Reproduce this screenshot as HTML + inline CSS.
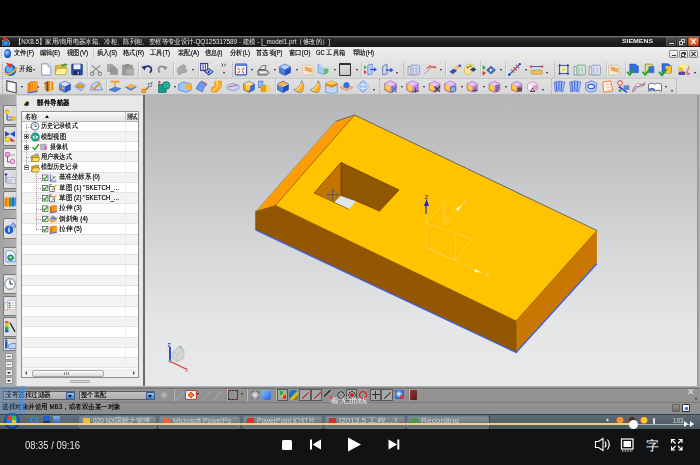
<!DOCTYPE html>
<html><head><meta charset="utf-8"><style>
*{margin:0;padding:0;box-sizing:border-box}
html,body{width:700px;height:465px;overflow:hidden;background:#000;font-family:"Liberation Sans",sans-serif}
.a{position:absolute}
.t{position:absolute;white-space:nowrap;filter:grayscale(1)}
.ic{position:absolute;border-radius:1px}
.dd{position:absolute;width:0;height:0;border-left:1.5px solid transparent;border-right:1.5px solid transparent;border-top:2px solid #222}
.sep{position:absolute;width:1px;background:#c4c4c4;box-shadow:1px 0 0 #ececec}
.grip{position:absolute;width:1px;background:repeating-linear-gradient(#a8a8a8 0 1px,transparent 1px 2px)}
</style></head><body>
<div class="a" style="left:0;top:36px;width:700px;height:11px;background:linear-gradient(#8a8a8a 0,#5c5c5c 1px,#2c2c2c 2px,#1e1e1e 6px,#1a1a1a 100%)"></div>
<div class="ic" style="left:2px;top:38px;width:8px;height:8px;background:radial-gradient(circle at 45% 65%,#40b0ff 0,#1060c0 45%,#e0a020 60%,transparent 64%);"></div>
<div class="ic" style="left:3px;top:37px;width:4px;height:4px;background:#e02828;border-radius:0 50% 50% 50%"></div>
<div class="t" style="left: 15px; top: 36.95px; font-size: 7px; line-height: 9.1px; color: rgb(232, 232, 232); display: inline-block; white-space: nowrap; transform: scaleX(0.9079); transform-origin: 0px 50%; width: 347.5px; overflow: hidden;">【NX8.5】家用/商用电器冰箱、冷柜、陈列柜、变框等专业设计-QQ125317589 - 建模 - [_model1.prt（修改的）]</div>
<div class="t" style="left: 622px; top: 38.1px; font-size: 6px; line-height: 7.8px; color: rgb(236, 236, 236); font-weight: bold; display: inline-block; white-space: nowrap; transform: scaleX(1.1475); transform-origin: 0px 50%; width: 27.6px; overflow: hidden;">SIEMENS</div>
<div class="a" style="left:666px;top:37px;width:10px;height:9px;border:1px solid #5a5a5a;background:linear-gradient(#505050,#2a2a2a);border-radius:1px"><div class="a" style="left:2px;top:5px;width:5px;height:1px;background:#e0e0e0"></div></div>
<div class="a" style="left:677px;top:37px;width:10px;height:9px;border:1px solid #5a5a5a;background:linear-gradient(#505050,#2a2a2a);border-radius:1px"><div class="a" style="left:3px;top:1px;width:4px;height:4px;border:1px solid #ccc"></div><div class="a" style="left:1px;top:3px;width:4px;height:4px;border:1px solid #ccc;background:#333"></div></div>
<div class="a" style="left:688px;top:37px;width:11px;height:9px;border:1px solid #b04a20;background:linear-gradient(#f59060,#d84818);border-radius:1px"><svg class="a" style="left:0;top:0" width="9" height="7" viewBox="0 0 9 7"><path d="M2.5,1.2L6.5,5.8M6.5,1.2L2.5,5.8" stroke="#fff" stroke-width="1.2"></path></svg></div>
<div class="a" style="left:0;top:47px;width:700px;height:13px;background:linear-gradient(#ececec,#e6e6e6)"></div>
<div class="ic" style="left:4px;top:49px;width:7px;height:9px;background:radial-gradient(circle at 40% 40%,#a0d0ff 0,#2a70d8 45%,#1040a0 80%);border-radius:50%"></div>
<div class="grip" style="left:1px;top:49px;height:9px"></div>
<div class="t" style="left: 14px; top: 49.475px; font-size: 6.5px; line-height: 8.45px; color: rgb(30, 30, 30); text-shadow: rgba(0, 0, 0, 0.8) 0px 0px 0.35px; display: inline-block; white-space: nowrap; transform: scaleX(0.8964); transform-origin: 0px 50%; width: 22.9px; overflow: hidden;">文件(F)</div>
<div class="t" style="left: 40px; top: 49.475px; font-size: 6.5px; line-height: 8.45px; color: rgb(30, 30, 30); text-shadow: rgba(0, 0, 0, 0.8) 0px 0px 0.35px; display: inline-block; white-space: nowrap; transform: scaleX(0.8822); transform-origin: 0px 50%; width: 23.2px; overflow: hidden;">编辑(E)</div>
<div class="t" style="left: 67px; top: 49.475px; font-size: 6.5px; line-height: 8.45px; color: rgb(30, 30, 30); text-shadow: rgba(0, 0, 0, 0.8) 0px 0px 0.35px; display: inline-block; white-space: nowrap; transform: scaleX(0.9263); transform-origin: 0px 50%; width: 23.2px; overflow: hidden;">视图(V)</div>
<div class="t" style="left: 97px; top: 49.475px; font-size: 6.5px; line-height: 8.45px; color: rgb(30, 30, 30); text-shadow: rgba(0, 0, 0, 0.8) 0px 0px 0.35px; display: inline-block; white-space: nowrap; transform: scaleX(0.8822); transform-origin: 0px 50%; width: 23.2px; overflow: hidden;">插入(S)</div>
<div class="t" style="left: 123px; top: 49.475px; font-size: 6.5px; line-height: 8.45px; color: rgb(30, 30, 30); text-shadow: rgba(0, 0, 0, 0.8) 0px 0px 0.35px; display: inline-block; white-space: nowrap; transform: scaleX(0.9118); transform-origin: 0px 50%; width: 23.6px; overflow: hidden;">格式(R)</div>
<div class="t" style="left: 150px; top: 49.475px; font-size: 6.5px; line-height: 8.45px; color: rgb(30, 30, 30); text-shadow: rgba(0, 0, 0, 0.8) 0px 0px 0.35px; display: inline-block; white-space: nowrap; transform: scaleX(0.8964); transform-origin: 0px 50%; width: 22.9px; overflow: hidden;">工具(T)</div>
<div class="t" style="left: 177.5px; top: 49.475px; font-size: 6.5px; line-height: 8.45px; color: rgb(30, 30, 30); text-shadow: rgba(0, 0, 0, 0.8) 0px 0px 0.35px; display: inline-block; white-space: nowrap; transform: scaleX(0.9263); transform-origin: 0px 50%; width: 23.2px; overflow: hidden;">装配(A)</div>
<div class="t" style="left: 205px; top: 49.475px; font-size: 6.5px; line-height: 8.45px; color: rgb(30, 30, 30); text-shadow: rgba(0, 0, 0, 0.8) 0px 0px 0.35px; display: inline-block; white-space: nowrap; transform: scaleX(0.8689); transform-origin: 0px 50%; width: 20.7px; overflow: hidden;">信息(I)</div>
<div class="t" style="left: 230px; top: 49.475px; font-size: 6.5px; line-height: 8.45px; color: rgb(30, 30, 30); text-shadow: rgba(0, 0, 0, 0.8) 0px 0px 0.35px; display: inline-block; white-space: nowrap; transform: scaleX(0.911); transform-origin: 0px 50%; width: 22.5px; overflow: hidden;">分析(L)</div>
<div class="t" style="left: 256px; top: 49.475px; font-size: 6.5px; line-height: 8.45px; color: rgb(30, 30, 30); text-shadow: rgba(0, 0, 0, 0.8) 0px 0px 0.35px; display: inline-block; white-space: nowrap; transform: scaleX(0.8931); transform-origin: 0px 50%; width: 30.2px; overflow: hidden;">首选项(P)</div>
<div class="t" style="left: 288.5px; top: 49.475px; font-size: 6.5px; line-height: 8.45px; color: rgb(30, 30, 30); text-shadow: rgba(0, 0, 0, 0.8) 0px 0px 0.35px; display: inline-block; white-space: nowrap; transform: scaleX(0.9192); transform-origin: 0px 50%; width: 23.9px; overflow: hidden;">窗口(O)</div>
<div class="t" style="left: 316px; top: 49.475px; font-size: 6.5px; line-height: 8.45px; color: rgb(30, 30, 30); text-shadow: rgba(0, 0, 0, 0.8) 0px 0px 0.35px; display: inline-block; white-space: nowrap; transform: scaleX(0.8906); transform-origin: 0px 50%; width: 33.1px; overflow: hidden;">GC 工具箱</div>
<div class="t" style="left: 352.5px; top: 49.475px; font-size: 6.5px; line-height: 8.45px; color: rgb(30, 30, 30); text-shadow: rgba(0, 0, 0, 0.8) 0px 0px 0.35px; display: inline-block; white-space: nowrap; transform: scaleX(0.9118); transform-origin: 0px 50%; width: 23.6px; overflow: hidden;">帮助(H)</div>
<div class="sep" style="left:93px;top:49px;height:9px"></div>
<div class="a" style="left:669px;top:50px;width:9px;height:8px;border:1px solid #8a8a8a;background:linear-gradient(#fafafa,#dcdcdc);border-radius:1px"></div>
<div class="a" style="left:679px;top:50px;width:9px;height:8px;border:1px solid #8a8a8a;background:linear-gradient(#fafafa,#dcdcdc);border-radius:1px"></div>
<div class="a" style="left:689px;top:50px;width:9px;height:8px;border:1px solid #8a8a8a;background:linear-gradient(#fafafa,#dcdcdc);border-radius:1px"></div>
<div class="a" style="left:671.5px;top:55px;width:4px;height:1px;background:#333"></div>
<div class="a" style="left:682px;top:51.5px;width:4px;height:3.5px;border:1px solid #444"></div><div class="a" style="left:680.5px;top:53px;width:4px;height:3.5px;border:1px solid #444;background:#eee"></div>
<svg class="a" style="left:689px;top:50px" width="9" height="8" viewBox="0 0 9 8"><path d="M2.3,1.8L6.7,6.2M6.7,1.8L2.3,6.2" stroke="#333" stroke-width="1.1"></path></svg>
<div class="a" style="left:0;top:60px;width:700px;height:18px;background:linear-gradient(#e4e4e4,#d8d8d8)"></div>
<div class="a" style="left:0;top:78px;width:700px;height:17px;background:linear-gradient(#e2e2e2,#d6d6d6)"></div>
<div class="a" style="left:0;top:77.5px;width:700px;height:1px;background:#c8c8c8"></div>
<div class="a" style="left:0;top:94px;width:700px;height:1px;background:#b8b8b8"></div>
<div class="a" style="left:676px;top:78px;width:24px;height:16px;background:#dcdcdc;border-left:1px solid #c0c0c0"></div>
<div class="grip" style="left:2px;top:62px;height:15px"></div>
<div class="t" style="left: 19px; top: 65.275px; font-size: 6.5px; line-height: 8.45px; color: rgb(17, 17, 17); text-shadow: rgba(0, 0, 0, 0.7) 0px 0px 0.4px; display: inline-block; white-space: nowrap; transform: scaleX(0.9286); transform-origin: 0px 50%; width: 14.5px; overflow: hidden;">开始</div>
<div class="dd" style="left:33.0px;top:68.5px;border-top-color:#222"></div>
<div class="sep" style="left:87px;top:62px;height:15px"></div>
<div class="sep" style="left:137.5px;top:62px;height:15px"></div>
<div class="sep" style="left:172.5px;top:62px;height:15px"></div>
<div class="dd" style="left:191.5px;top:69px;border-top-color:#222"></div>
<div class="sep" style="left:197.5px;top:62px;height:15px"></div>
<svg class="a" style="left:221px;top:63px" width="6" height="4" viewBox="0 0 6 4"><path d="M0.5,0.5L2,2L0.5,3.5M3,0.5L4.5,2L3,3.5" stroke="#333" stroke-width="0.8" fill="none"></path></svg>
<div class="dd" style="left:222.5px;top:72px;border-top-color:#222"></div>
<div class="grip" style="left:232px;top:62px;height:15px"></div>
<div class="dd" style="left:251.0px;top:69px;border-top-color:#222"></div>
<div class="dd" style="left:273.5px;top:69px;border-top-color:#222"></div>
<div class="dd" style="left:295.5px;top:69px;border-top-color:#222"></div>
<div class="dd" style="left:333.5px;top:69px;border-top-color:#222"></div>
<div class="ic" style="left:339px;top:63px;width:12px;height:13px;background:linear-gradient(#e0e0e0,#c4c4c4);border:1.2px solid #303030;border-top-width:2px;border-radius:1px"></div>
<div class="dd" style="left:355.5px;top:69px;border-top-color:#222"></div>
<div class="sep" style="left:360.5px;top:62px;height:15px"></div>
<div class="dd" style="left:395.5px;top:72px;border-top-color:#222"></div>
<div class="grip" style="left:403px;top:62px;height:15px"></div>
<div class="dd" style="left:439.5px;top:69px;border-top-color:#222"></div>
<div class="sep" style="left:444.5px;top:62px;height:15px"></div>
<div class="sep" style="left:480px;top:62px;height:15px"></div>
<div class="dd" style="left:499.5px;top:69px;border-top-color:#222"></div>
<div class="sep" style="left:504.7px;top:62px;height:15px"></div>
<div class="dd" style="left:524.5px;top:69px;border-top-color:#222"></div>
<div class="dd" style="left:546.0px;top:72px;border-top-color:#222"></div>
<div class="grip" style="left:554px;top:62px;height:15px"></div>
<div class="sep" style="left:605.5px;top:62px;height:15px"></div>
<div class="sep" style="left:625px;top:62px;height:15px"></div>
<div class="dd" style="left:693.5px;top:72px;border-top-color:#222"></div>
<div class="grip" style="left:2px;top:79px;height:15px"></div>
<div class="dd" style="left:20.5px;top:86px;border-top-color:#222"></div>
<div class="sep" style="left:106px;top:79px;height:15px"></div>
<div class="dd" style="left:173.5px;top:86px;border-top-color:#222"></div>
<div class="sep" style="left:274.5px;top:79px;height:15px"></div>
<div class="dd" style="left:372.5px;top:89px;border-top-color:#222"></div>
<div class="grip" style="left:378.5px;top:79px;height:15px"></div>
<div class="dd" style="left:400.5px;top:86px;border-top-color:#222"></div>
<div class="dd" style="left:422.5px;top:86px;border-top-color:#222"></div>
<div class="dd" style="left:460.5px;top:86px;border-top-color:#222"></div>
<div class="dd" style="left:482.5px;top:86px;border-top-color:#222"></div>
<div class="dd" style="left:504.5px;top:86px;border-top-color:#222"></div>
<div class="dd" style="left:541.5px;top:89px;border-top-color:#222"></div>
<div class="grip" style="left:550.5px;top:79px;height:15px"></div>
<div class="dd" style="left:664.5px;top:86px;border-top-color:#222"></div>
<div class="dd" style="left:670.5px;top:90px;border-top-color:#222"></div>
<svg class="a" style="left:0;top:0" width="700" height="100" viewBox="0 0 700 100"><g transform="translate(3.50,62.50) scale(1.167)"><circle cx="6" cy="6.5" r="5" fill="#1a6ad8"></circle><circle cx="5" cy="5.5" r="3" fill="#50b8ff"></circle><path d="M0.5,9Q6,12 11.5,4" stroke="#f0b020" stroke-width="1.5" fill="none"></path><path d="M2,0.5L6,4.5L4,0.5Z" fill="#e02020"></path><path d="M3,1L6,5L8,1Z" fill="#e83030"></path></g><g transform="translate(39.50,63.00) scale(1.083)"><path d="M2,0.8H7.8L10.5,3.5V11.2H2Z" fill="#ffffff" stroke="#7080c8" stroke-width="0.8"></path><path d="M7.8,0.8V3.5H10.5" fill="#e0e4ff" stroke="#7080c8" stroke-width="0.6"></path></g><g transform="translate(54.50,63.00) scale(1.083)"><path d="M0.8,2.5H4.5L5.5,1.5H10.5V10.5H0.8Z" fill="#e8b830" stroke="#a07810" stroke-width="0.5"></path><path d="M2,5H11.8L10.3,10.8H0.5Z" fill="#fff0a0" stroke="#b08810" stroke-width="0.5"></path><path d="M7,3.5Q9,0 11.5,2" stroke="#30a040" stroke-width="1.4" fill="none"></path></g><g transform="translate(70.50,63.00) scale(1.083)"><rect x="1" y="1" width="10" height="10" rx="0.8" fill="#2a4aa8" stroke="#102a70" stroke-width="0.5"></rect><rect x="2.8" y="1.2" width="6.4" height="4.5" fill="#eef2ff"></rect><rect x="3.2" y="7.5" width="5.6" height="3.5" fill="#1a2a60"></rect><rect x="6.5" y="8" width="1.2" height="2.5" fill="#c0c8e0"></rect></g><g transform="translate(89.50,63.00) scale(1.083)"><path d="M2,2L10,9M10,2L2,9" stroke="#9a9a9a" stroke-width="1.2"></path><circle cx="2.5" cy="10" r="1.6" fill="none" stroke="#8a8a8a" stroke-width="1"></circle><circle cx="9.5" cy="10" r="1.6" fill="none" stroke="#8a8a8a" stroke-width="1"></circle></g><g transform="translate(106.50,63.50) scale(1.000)"><path d="M1,1H6L8,3V8H1Z" fill="#a8a8a8" stroke="#888" stroke-width="0.5"></path><path d="M4,4H9L11,6V11H4Z" fill="#989898" stroke="#808080" stroke-width="0.5"></path></g><g transform="translate(121.50,63.00) scale(1.083)"><rect x="1" y="2" width="9" height="9" fill="#9a9a9a" stroke="#808080" stroke-width="0.5"></rect><rect x="3.5" y="1" width="4" height="2" fill="#888"></rect><rect x="4" y="5" width="7" height="6" fill="#b0b0b0" stroke="#888" stroke-width="0.5"></rect></g><g transform="translate(140.50,63.00) scale(1.083)"><path d="M3,5Q6,1.5 9.5,4Q11,7 8.5,9" fill="none" stroke="#1a3080" stroke-width="1.6"></path><path d="M0.8,3.5L4.8,2.5L4,7Z" fill="#1a3080"></path></g><g transform="translate(156.50,63.50) scale(1.000)"><path d="M9,5Q6,1.5 2.5,4Q1,7 3.5,9" fill="none" stroke="#8a8a8a" stroke-width="1.6"></path><path d="M11.2,3.5L7.2,2.5L8,7Z" fill="#8a8a8a"></path></g><g transform="translate(175.50,63.00) scale(1.083)"><path d="M2,8Q1,4 5,3L7,1.5Q10,2 9,5L11,7Q9,10 6,9L3,11Z" fill="#a8a8a8" stroke="#8a8a8a" stroke-width="0.5"></path><path d="M0.5,6H4M0.5,8H3.5" stroke="#b8b8b8" stroke-width="0.6"></path></g><g transform="translate(199.50,62.50) scale(1.167)"><rect x="1" y="0.8" width="6" height="6" fill="#f4f4ff" stroke="#2a3a90" stroke-width="0.9"></rect><path d="M3,1V6.5M5,1V6.5" stroke="#2a3a90" stroke-width="0.8"></path><path d="M4.5,7.5L8,5.5L11.5,8L8,10.5Z" fill="#f4f4ff" stroke="#2a3a90" stroke-width="0.9"></path><circle cx="8" cy="8" r="1.2" fill="#2040c0"></circle></g><g transform="translate(234.50,63.00) scale(1.083)"><rect x="0.8" y="1" width="10.4" height="10" rx="0.8" fill="#f4f6ff" stroke="#3050b0" stroke-width="1"></rect><rect x="0.8" y="1" width="10.4" height="1.8" fill="#5a80d8"></rect><path d="M3,4.5L5,6.5M9,4.5L7,6.5M3,9.5L5,7.5M9,9.5L7,7.5" stroke="#f06040" stroke-width="1.1"></path></g><g transform="translate(257.00,63.00) scale(1.083)"><path d="M2,6L5,2.5H8.5L7,6Z" fill="#f0f0f0" stroke="#404040" stroke-width="0.7"></path><path d="M1,6.5H9L11,9L9,11H1Z" fill="#c8c8c8" stroke="#404040" stroke-width="0.8"></path><path d="M3,8.5H8" stroke="#fff" stroke-width="0.8"></path></g><g transform="translate(278.50,63.00) scale(1.083)"><path d="M1,3.5L6,1L11,3.5L6,6Z" fill="#b8d4ff"></path><path d="M1,3.5L6,6V11.5L1,9Z" fill="#4a7ee8"></path><path d="M6,6L11,3.5V9L6,11.5Z" fill="#2a52c0"></path><path d="M1,3.5L6,1L11,3.5V9L6,11.5L1,9Z" fill="none" stroke="#1a3a90" stroke-width="0.5"></path></g><g transform="translate(301.50,63.00) scale(1.083)"><path d="M1,2H9L11,4V11H1Z" fill="#f4e8d8" stroke="#c8b090" stroke-width="0.5"></path><path d="M3,3L10,5V9L3,7Z" fill="#f0a040" opacity="0.9"></path></g><g transform="translate(317.00,63.25) scale(1.042)"><path d="M1,1L7,3V11L1,9Z" fill="#a8c8f0" stroke="#5080c0" stroke-width="0.5"></path><path d="M7,3L11,5V9L7,11Z" fill="#60c060"></path><path d="M1,1L5,1L11,5H7Z" fill="#d0e0f8"></path></g><g transform="translate(363.50,63.00) scale(1.083)"><path d="M0.5,2L3,4L0.5,6Z" fill="#30b040"></path><path d="M0.5,6.5L3,8.5L0.5,10.5Z" fill="#e03030"></path><path d="M4,2L8,1V10L4,11Z" fill="#b8d0f0" stroke="#3060c0" stroke-width="0.5"></path><path d="M6,6H11.5M9.5,4.5L11.5,6L9.5,7.5" stroke="#2050d0" stroke-width="1.1" fill="none"></path></g><g transform="translate(380.50,63.00) scale(1.083)"><path d="M2,3L6,1V10L2,11Z" fill="#c8d8f4" stroke="#405080" stroke-width="0.6"></path><path d="M5,6.5H11M9,5L11,6.5L9,8" stroke="#2050d0" stroke-width="1.1" fill="none"></path></g><g transform="translate(407.50,63.00) scale(1.083)"><rect x="0.5" y="3" width="7" height="8" fill="#e0e0e0" stroke="#707070" stroke-width="0.5"></rect><rect x="3" y="2" width="8" height="9" rx="1" fill="#d0d8f0" stroke="#8090b8" stroke-width="0.7"></rect><path d="M5,4V10M8,4V10" stroke="#8090b8" stroke-width="0.6"></path></g><g transform="translate(423.50,63.00) scale(1.083)"><path d="M1,10L5,6L9,3" stroke="#808080" stroke-width="0.7" fill="none"></path><path d="M3,5L6,3L10,4" stroke="#e04030" stroke-width="1" fill="none"></path><circle cx="6" cy="3" r="1" fill="#f06040"></circle><circle cx="10.5" cy="4" r="1" fill="#e04030"></circle></g><g transform="translate(448.50,63.00) scale(1.083)"><path d="M1,8L5,5L8,7L4,10.5Z" fill="#3050b0"></path><path d="M4.5,5L9,1.5L11,3.5L7.5,7Z" fill="#f0c080"></path><circle cx="10.5" cy="2.5" r="1.2" fill="#3050c0"></circle></g><g transform="translate(463.50,63.00) scale(1.083)"><path d="M1,5Q2,1 7,1Q11,2 10,6Q7,7 6,10Q3,12 1,9Z" fill="#f8e890" stroke="#c0a030" stroke-width="0.5"></path><circle cx="4" cy="4" r="1" fill="#e03030"></circle><circle cx="6.5" cy="3" r="1" fill="#30a040"></circle><path d="M6,6L9,4L12,6L9,8Z" fill="#2a3a90"></path></g><g transform="translate(482.00,62.75) scale(1.125)"><path d="M0.5,2L3.5,4.5L0.5,6.5Z" fill="#30b030"></path><path d="M0.5,7L3.5,9L0.5,11.5Z" fill="#e03030"></path><path d="M4,6.5L8,3L12,6.5L8,10Z" fill="#4070d0" stroke="#203a90" stroke-width="0.5"></path><path d="M7,5L9.5,6.5L7,8Z" fill="#fff"></path></g><g transform="translate(507.50,62.50) scale(1.167)"><path d="M1,11L11,1" stroke="#3050d0" stroke-width="1"></path><path d="M3,6L6,9M5,4L8,7M7,2L10,5" stroke="#e04040" stroke-width="0.9"></path><circle cx="1.5" cy="10.5" r="1" fill="#2040c0"></circle><circle cx="10.5" cy="1.5" r="1" fill="#2040c0"></circle></g><g transform="translate(529.50,62.50) scale(1.167)"><path d="M0.5,3.5H11.5" stroke="#3050c0" stroke-width="0.8"></path><circle cx="1.2" cy="3.5" r="1" fill="#e04040"></circle><circle cx="10.8" cy="3.5" r="1" fill="#e04040"></circle><rect x="1" y="6.5" width="10" height="3.5" rx="1" fill="#e8c060" stroke="#b09040" stroke-width="0.5"></rect></g><g transform="translate(557.50,63.25) scale(1.042)"><rect x="2" y="2" width="8" height="8" fill="none" stroke="#2a3a90" stroke-width="0.8"></rect><rect x="3.5" y="3.5" width="5" height="5" fill="#f8f0a0"></rect><circle cx="6" cy="6" r="1.3" fill="#e8d020"></circle><circle cx="2" cy="2" r="1" fill="#2a3a90"></circle><circle cx="10" cy="2" r="1" fill="#2a3a90"></circle><circle cx="2" cy="10" r="1" fill="#2a3a90"></circle><circle cx="10" cy="10" r="1" fill="#2a3a90"></circle></g><g transform="translate(573.50,63.00) scale(1.083)"><rect x="0.5" y="3" width="7" height="8" fill="#e0e0e0" stroke="#707070" stroke-width="0.5"></rect><rect x="3" y="2" width="8" height="9" rx="1" fill="#d8e8d8" stroke="#60a080" stroke-width="0.7"></rect><path d="M5,4V10M8,4V10" stroke="#60a080" stroke-width="0.6"></path></g><g transform="translate(588.50,63.00) scale(1.083)"><rect x="0.5" y="3" width="7" height="8" fill="#e0e0e0" stroke="#707070" stroke-width="0.5"></rect><rect x="3" y="2" width="8" height="9" rx="1" fill="#e0e4f0" stroke="#8090b8" stroke-width="0.7"></rect><path d="M5,4V10M8,4V10" stroke="#8090b8" stroke-width="0.6"></path></g><g transform="translate(607.50,63.00) scale(1.083)"><path d="M1,2H9L11,4V11H1Z" fill="#f4e8d8" stroke="#c8b090" stroke-width="0.5"></path><path d="M3,3L10,5V9L3,7Z" fill="#f0a040" opacity="0.9"></path></g><g transform="translate(626.50,63.00) scale(1.083)"><path d="M3,1H8L11,3V9H3Z" fill="#3070e0" stroke="#2050b0" stroke-width="0.5"></path><path d="M0.5,8L3,11L7,5.5" stroke="#20a020" stroke-width="1.5" fill="none"></path></g><g transform="translate(642.00,63.00) scale(1.083)"><path d="M3,1H8L11,3V9H3Z" fill="#f0e060" stroke="#2050b0" stroke-width="0.5"></path><path d="M6,3H11V9H6Z" fill="#3070e0"></path><path d="M0.5,8L3,11L7,5.5" stroke="#20a020" stroke-width="1.5" fill="none"></path></g><g transform="translate(658.50,62.50) scale(1.167)"><path d="M3,1H8L11,3V9H3Z" fill="#3070e0" stroke="#2050b0" stroke-width="0.5"></path><path d="M6,3H11V9H6Z" fill="#ffc020"></path><path d="M0.5,8L3,11L7,5.5" stroke="#20a020" stroke-width="1.5" fill="none"></path></g><g transform="translate(677.50,63.00) scale(1.083)"><path d="M1,3L5,1L9,3L5,5Z" fill="#fff080"></path><path d="M1,3L5,5V9L1,7Z" fill="#f0c020"></path><rect x="1" y="8" width="6" height="3" fill="#6040a0"></rect><path d="M8,10L11,3" stroke="#e08030" stroke-width="1.2"></path><path d="M9,8.5L12,10L9,11.5Z" fill="#e040c0"></path></g><g transform="translate(4.50,79.50) scale(1.167)"><path d="M2,1L10,3V11.5L2,9.5Z" fill="#f8f8f8" stroke="#404040" stroke-width="0.9"></path></g><g transform="translate(26.50,80.00) scale(1.083)"><path d="M1,3L4,1.5V10.5L1,12Z" fill="#f08000"></path><path d="M4,1.5H10V10.5H4Z" fill="#ffb030" stroke="#c06000" stroke-width="0.4"></path><path d="M5.5,2V10M8,2V10" stroke="#e07000" stroke-width="0.6"></path><path d="M10,5L12,6.5L10,8Z" fill="#e03030"></path><path d="M1,12L10,10.5" stroke="#3060d0" stroke-width="1"></path></g><g transform="translate(42.50,80.00) scale(1.083)"><path d="M2,2Q6,0 10,2V9Q6,12 2,9Z" fill="#f09000"></path><path d="M4.5,1.5V10.5" stroke="#2a50c0" stroke-width="1.5"></path><path d="M7.5,1.5V10.5" stroke="#ffd060" stroke-width="1.2"></path><path d="M1.5,3H3.5" stroke="#e03030" stroke-width="1"></path></g><g transform="translate(58.50,80.00) scale(1.083)"><path d="M1,3.5L6,1L11,3.5L6,6Z" fill="#d0e4ff"></path><path d="M1,3.5L6,6V11.5L1,9Z" fill="#5a8ef0"></path><path d="M6,6L11,3.5V9L6,11.5Z" fill="#2a5ad0"></path><path d="M1,3.5L6,1L11,3.5V9L6,11.5L1,9Z" fill="none" stroke="#1a3a90" stroke-width="0.5"></path><circle cx="4" cy="7.5" r="1.5" fill="#f06020"></circle><circle cx="4" cy="7.5" r="0.8" fill="#ffd020"></circle></g><g transform="translate(73.50,80.00) scale(1.083)"><path d="M1,6L6,2L11,5L7,10Z" fill="#b0d0ff" stroke="#4a80d0" stroke-width="0.6"></path><ellipse cx="6" cy="5.8" rx="3.2" ry="1.7" fill="#f0a000" stroke="#c06000" stroke-width="0.4"></ellipse></g><g transform="translate(89.50,79.50) scale(1.167)"><path d="M1,9Q1,2 8,2L11,9Z" fill="#c0d8ff" stroke="#5a7ac8" stroke-width="0.6"></path><path d="M4,8L9,3" stroke="#f09000" stroke-width="1.6"></path><path d="M2,6L5,9" stroke="#e04040" stroke-width="0.6"></path></g><g transform="translate(108.50,80.00) scale(1.083)"><path d="M2,1.5H10" stroke="#f0a030" stroke-width="1.8"></path><path d="M6,2V7" stroke="#f0a030" stroke-width="1.2"></path><path d="M0.5,9L6,6.5L11.5,8L6,11Z" fill="#4a80e8" stroke="#2050b0" stroke-width="0.4"></path></g><g transform="translate(124.50,80.00) scale(1.083)"><path d="M0.5,7L6,4L11.5,6.5L6,10Z" fill="#4a7ee8"></path><path d="M1.5,6L6,3.5L10.5,5.5L6,8Z" fill="#ffa020"></path><path d="M3,5L7.5,7.5M4.5,4.3L9,6.8M4,6.8L8,4.8" stroke="#ffd080" stroke-width="0.5"></path></g><g transform="translate(141.50,80.00) scale(1.083)"><path d="M2,10L6,7L10,2" stroke="#4a70c0" stroke-width="1" fill="none"></path><rect x="0.5" y="8.5" width="3" height="3" fill="#f0d000" stroke="#e04020" stroke-width="0.6"></rect><rect x="6.5" y="3" width="3" height="3" fill="#f0e060" stroke="#5070c0" stroke-width="0.6"></rect><circle cx="5" cy="8" r="1" fill="#f06020"></circle></g><g transform="translate(157.50,80.00) scale(1.083)"><rect x="1" y="4" width="7" height="7.5" fill="#10a090" stroke="#106050" stroke-width="0.6"></rect><circle cx="8" cy="5" r="3.5" fill="#20b0a0" stroke="#106050" stroke-width="0.6"></circle><path d="M0.5,2H3M1.7,0.8V3.2" stroke="#e02020" stroke-width="0.9"></path></g><g transform="translate(178.00,79.50) scale(1.167)"><path d="M0.5,4L5,2L11.5,4V9L7,11L0.5,9Z" fill="#a0c4ff" stroke="#4070d0" stroke-width="0.5"></path><path d="M6,3L11.5,4V9L6,8Z" fill="#ffb040"></path></g><g transform="translate(195.00,80.00) scale(1.083)"><path d="M1,8Q3,3 6,1L11,4Q8,6 7,11Z" fill="#6a9af0" stroke="#3060c0" stroke-width="0.5"></path><path d="M6,1L11,4L9,5.5" stroke="#e04040" stroke-width="0.8" fill="none"></path></g><g transform="translate(210.50,80.00) scale(1.083)"><path d="M4,1H10V6L6,11H1V7L4,6Z" fill="#ffb020" stroke="#e07000" stroke-width="0.5"></path><path d="M4,1H6V7L1,11" stroke="#fff090" stroke-width="0.8" fill="none"></path></g><g transform="translate(226.50,80.00) scale(1.083)"><path d="M0.5,5L6,3L11.5,5V8L6,10L0.5,8Z" fill="#c8d8f8" stroke="#5070c0" stroke-width="0.5"></path><path d="M2,6.5L10,4.5" stroke="#e04040" stroke-width="0.8"></path></g><g transform="translate(242.50,80.00) scale(1.083)"><path d="M1,3.5L6,1L11,3.5L6,6Z" fill="#ffe080"></path><path d="M1,3.5L6,6V11.5L1,9Z" fill="#f0a020"></path><path d="M6,6L11,3.5V9L6,11.5Z" fill="#3a70e0"></path><path d="M1,3.5L6,1L11,3.5V9L6,11.5L1,9Z" fill="none" stroke="#2050b0" stroke-width="0.5"></path><rect x="3" y="5" width="4" height="4" fill="#ffd040"></rect></g><g transform="translate(257.50,80.00) scale(1.083)"><rect x="1" y="1" width="4" height="6" fill="#90b8f0" stroke="#3060c0" stroke-width="0.5"></rect><path d="M3,6L8,4V11L3,11Z" fill="#f0a000"></path><path d="M8,4L11,5V11H8Z" fill="#ffd060"></path></g><g transform="translate(276.50,80.00) scale(1.083)"><path d="M1,3.5L6,1L11,3.5L6,6Z" fill="#ffb040"></path><path d="M1,3.5L6,6V11.5L1,9Z" fill="#4a80e8"></path><path d="M6,6L11,3.5V9L6,11.5Z" fill="#2050c0"></path><path d="M1,3.5L6,1L11,3.5V9L6,11.5L1,9Z" fill="none" stroke="#1a3a90" stroke-width="0.5"></path><path d="M1,3.5L6,6L11,3.5" stroke="#fff" stroke-width="0.6" fill="none"></path><rect x="2" y="5" width="3" height="1.5" fill="#f08000"></rect></g><g transform="translate(293.00,80.00) scale(1.083)"><path d="M8,0.5Q12,6 8,11.5Q3,12 0.5,9Q6,8 8,0.5Z" fill="#ffb020" stroke="#5070c0" stroke-width="0.5"></path><path d="M2,9.5Q6,9 7.8,3" stroke="#ffe080" stroke-width="1" fill="none"></path></g><g transform="translate(309.50,80.00) scale(1.083)"><path d="M8,0.5Q12,6 8,11.5Q3,12 0.5,9Q6,8 8,0.5Z" fill="#ffb020" stroke="#5070c0" stroke-width="0.5"></path><path d="M2,9.5Q6,9 7.8,3" stroke="#ffe080" stroke-width="1" fill="none"></path></g><g transform="translate(324.50,79.50) scale(1.167)"><path d="M1,3L6,1L11,3V11L6,12L1,11Z" fill="#c0d8f8" stroke="#5080c0" stroke-width="0.5"></path><path d="M1,3L6,1L11,3L6,5Z" fill="#ffd040"></path><path d="M1,3L6,5L11,3V5L6,7L1,5Z" fill="#f08020"></path></g><g transform="translate(339.50,79.50) scale(1.167)"><path d="M0.5,7L6,4.5L11.5,7L6,9.5Z" fill="#f0c0a0" stroke="#e07040" stroke-width="0.5"></path><path d="M3.5,3.5L6,2L8.5,3.5V6.5L6,8L3.5,6.5Z" fill="#3070e0"></path></g><g transform="translate(356.50,80.00) scale(1.083)"><path d="M6,0.5L11.5,6L6,11.5L0.5,6Z" fill="#a0c4ff" stroke="#3a6ad0" stroke-width="0.6"></path><ellipse cx="6" cy="6" rx="5" ry="2" fill="none" stroke="#fff" stroke-width="0.6"></ellipse><path d="M6,1V11" stroke="#fff" stroke-width="0.5"></path></g><g transform="translate(383.50,79.50) scale(1.167)"><path d="M1,3.5L6,1L11,3.5L6,6Z" fill="#e8c0ff"></path><path d="M1,3.5L6,6V11.5L1,9Z" fill="#f8a800"></path><path d="M6,6L11,3.5V9L6,11.5Z" fill="#c080e0"></path><path d="M1,3.5L6,1L11,3.5V9L6,11.5L1,9Z" fill="none" stroke="#9050b0" stroke-width="0.5"></path><path d="M1.8,4.5L5.5,6.3V10L1.8,8.2Z" fill="#ffd040"></path><path d="M7,6L11,11M11,6L7,11" stroke="#606060" stroke-width="0.9"></path><circle cx="9" cy="8.5" r="1.5" fill="#5080d0"></circle></g><g transform="translate(405.50,79.50) scale(1.167)"><path d="M1,3.5L6,1L11,3.5L6,6Z" fill="#e8c0ff"></path><path d="M1,3.5L6,6V11.5L1,9Z" fill="#f8a800"></path><path d="M6,6L11,3.5V9L6,11.5Z" fill="#c080e0"></path><path d="M1,3.5L6,1L11,3.5V9L6,11.5L1,9Z" fill="none" stroke="#9050b0" stroke-width="0.5"></path><path d="M1.8,4.5L5.5,6.3V10L1.8,8.2Z" fill="#ffd040"></path><path d="M6,10H11.5M8.7,7V11.5" stroke="#404040" stroke-width="0.8"></path></g><g transform="translate(428.00,80.00) scale(1.083)"><path d="M1,3.5L6,1L11,3.5L6,6Z" fill="#e8c0ff"></path><path d="M1,3.5L6,6V11.5L1,9Z" fill="#f8a800"></path><path d="M6,6L11,3.5V9L6,11.5Z" fill="#c080e0"></path><path d="M1,3.5L6,1L11,3.5V9L6,11.5L1,9Z" fill="none" stroke="#9050b0" stroke-width="0.5"></path><path d="M1.8,4.5L5.5,6.3V10L1.8,8.2Z" fill="#ffd040"></path><path d="M6,6L11,11M11,6L6,11" stroke="#404040" stroke-width="1.2"></path></g><g transform="translate(443.50,79.75) scale(1.125)"><path d="M1,3.5L6,1L11,3.5L6,6Z" fill="#e8c0ff"></path><path d="M1,3.5L6,6V11.5L1,9Z" fill="#f8a800"></path><path d="M6,6L11,3.5V9L6,11.5Z" fill="#c080e0"></path><path d="M1,3.5L6,1L11,3.5V9L6,11.5L1,9Z" fill="none" stroke="#9050b0" stroke-width="0.5"></path><path d="M1.8,4.5L5.5,6.3V10L1.8,8.2Z" fill="#ffd040"></path><circle cx="8.5" cy="8.5" r="2.5" fill="#90b0e0" stroke="#3050a0" stroke-width="0.6"></circle></g><g transform="translate(466.00,80.25) scale(1.042)"><path d="M1,3.5L6,1L11,3.5L6,6Z" fill="#e8c0ff"></path><path d="M1,3.5L6,6V11.5L1,9Z" fill="#f8a800"></path><path d="M6,6L11,3.5V9L6,11.5Z" fill="#c080e0"></path><path d="M1,3.5L6,1L11,3.5V9L6,11.5L1,9Z" fill="none" stroke="#9050b0" stroke-width="0.5"></path><path d="M1.8,4.5L5.5,6.3V10L1.8,8.2Z" fill="#ffd040"></path><path d="M6,10H11.5M8.7,7V11.5" stroke="#404040" stroke-width="0.8"></path></g><g transform="translate(488.00,80.00) scale(1.083)"><path d="M1,3.5L6,1L11,3.5L6,6Z" fill="#e8c0ff"></path><path d="M1,3.5L6,6V11.5L1,9Z" fill="#f8a800"></path><path d="M6,6L11,3.5V9L6,11.5Z" fill="#c080e0"></path><path d="M1,3.5L6,1L11,3.5V9L6,11.5L1,9Z" fill="none" stroke="#9050b0" stroke-width="0.5"></path><path d="M1.8,4.5L5.5,6.3V10L1.8,8.2Z" fill="#ffd040"></path><circle cx="8.5" cy="6" r="1.3" fill="none" stroke="#404040" stroke-width="0.7"></circle><circle cx="8.5" cy="9.5" r="1.3" fill="none" stroke="#404040" stroke-width="0.7"></circle></g><g transform="translate(510.50,80.25) scale(1.042)"><path d="M1,3.5L6,1L11,3.5L6,6Z" fill="#e8c0ff"></path><path d="M1,3.5L6,6V11.5L1,9Z" fill="#f8a800"></path><path d="M6,6L11,3.5V9L6,11.5Z" fill="#c080e0"></path><path d="M1,3.5L6,1L11,3.5V9L6,11.5L1,9Z" fill="none" stroke="#9050b0" stroke-width="0.5"></path><path d="M1.8,4.5L5.5,6.3V10L1.8,8.2Z" fill="#ffd040"></path><path d="M6.5,7H11V11H6.5Z" fill="#404040" opacity="0.8"></path></g><g transform="translate(526.50,80.50) scale(1.000)"><path d="M1,3.5L6,1L11,3.5L6,6Z" fill="#f8e0f8"></path><path d="M1,3.5L6,6V11.5L1,9Z" fill="#fff0f8"></path><path d="M6,6L11,3.5V9L6,11.5Z" fill="#e0a0d0"></path><path d="M1,3.5L6,1L11,3.5V9L6,11.5L1,9Z" fill="none" stroke="#b070a0" stroke-width="0.5"></path><path d="M4,11L6,7.5L8,11Z" fill="none" stroke="#303030" stroke-width="0.8"></path><path d="M7,5V10" stroke="#f0a000" stroke-width="1"></path></g><g transform="translate(553.00,80.00) scale(1.083)"><path d="M1,2Q6,0 11,2L9,11Q5,9 2,11Z" fill="#a0c0ff" stroke="#3050c0" stroke-width="0.5"></path><path d="M3,2L3.5,10M5.5,1.5L5.5,9.5M8,1.5L7.5,10" stroke="#3a5ad0" stroke-width="0.9"></path></g><g transform="translate(568.50,79.75) scale(1.125)"><path d="M1,2Q6,0 11,2L9,11Q5,9 2,11Z" fill="#a0c0ff" stroke="#3050c0" stroke-width="0.5"></path><path d="M3,2L3.5,10M5.5,1.5L5.5,9.5M8,1.5L7.5,10" stroke="#3a5ad0" stroke-width="0.9"></path></g><g transform="translate(584.50,79.75) scale(1.125)"><path d="M1,3L6,1L11,3L10,10L5,11L1,9Z" fill="#b8d0ff" stroke="#3050c0" stroke-width="0.5"></path><ellipse cx="6" cy="6" rx="3" ry="2" fill="#e8f0ff" stroke="#2a4ab0" stroke-width="0.9"></ellipse></g><g transform="translate(600.50,79.75) scale(1.125)"><path d="M2,2L9,1L11,10L3,11Z" fill="#fff8f0" stroke="#f07030" stroke-width="0.8"></path><path d="M4,4H9M4.5,6.5H9.5M5,9H10" stroke="#f0a060" stroke-width="0.6"></path></g><g transform="translate(616.50,79.50) scale(1.167)"><circle cx="3" cy="3" r="2" fill="#f0f0f0" stroke="#e03030" stroke-width="0.8"></circle><path d="M2,6L9,11" stroke="#3050c0" stroke-width="1.4"></path><rect x="6" y="5" width="5" height="4" fill="#6080d0"></rect><circle cx="3" cy="9.5" r="1.2" fill="#30a040"></circle></g><g transform="translate(631.50,79.50) scale(1.167)"><path d="M1,9Q4,2 8,4T11,2V5Q8,7 5,6T1,11Z" fill="#f4f4ff" stroke="#e06060" stroke-width="0.6"></path><path d="M2,10Q5,5 11,4" stroke="#4070d0" stroke-width="0.8" fill="none"></path></g><g transform="translate(648.00,79.50) scale(1.167)"><path d="M0.5,4Q4,2 6,4Q8,2 11.5,4V10Q8,8 6,10Q4,8 0.5,10Z" fill="#ffffff" stroke="#404040" stroke-width="0.6"></path><path d="M1,8.5Q4,7 6,9" stroke="#3050c0" stroke-width="1.2" fill="none"></path></g></svg>
<div class="a" style="left:0;top:95px;width:17px;height:291px;background:linear-gradient(90deg,#a4a4a4,#b0b0b0)"></div>
<div class="a" style="left:3px;top:105px;width:13px;height:20px;border:1px solid #7a7a7a;border-right:none;border-radius:2px 0 0 2px;background:linear-gradient(90deg,#e4e4e4,#d6d6d6)"></div>
<div class="a" style="left:3px;top:126px;width:13px;height:20px;border:1px solid #7a7a7a;border-right:none;border-radius:2px 0 0 2px;background:linear-gradient(90deg,#e4e4e4,#d6d6d6)"></div>
<div class="a" style="left:3px;top:148px;width:15px;height:20px;border:1px solid #7a7a7a;border-right:none;border-radius:2px 0 0 2px;background:#eeeeee"></div>
<div class="a" style="left:3px;top:169px;width:13px;height:20px;border:1px solid #7a7a7a;border-right:none;border-radius:2px 0 0 2px;background:linear-gradient(90deg,#e4e4e4,#d6d6d6)"></div>
<div class="a" style="left:3px;top:191px;width:13px;height:19px;border:1px solid #7a7a7a;border-right:none;border-radius:2px 0 0 2px;background:linear-gradient(90deg,#e4e4e4,#d6d6d6)"></div>
<div class="a" style="left:3px;top:218px;width:13px;height:20.5px;border:1px solid #7a7a7a;border-right:none;border-radius:2px 0 0 2px;background:linear-gradient(90deg,#e4e4e4,#d6d6d6)"></div>
<div class="a" style="left:3px;top:246.5px;width:13px;height:19.5px;border:1px solid #7a7a7a;border-right:none;border-radius:2px 0 0 2px;background:linear-gradient(90deg,#e4e4e4,#d6d6d6)"></div>
<div class="a" style="left:3px;top:274px;width:13px;height:20px;border:1px solid #7a7a7a;border-right:none;border-radius:2px 0 0 2px;background:linear-gradient(90deg,#e4e4e4,#d6d6d6)"></div>
<div class="a" style="left:3px;top:296px;width:13px;height:19.5px;border:1px solid #7a7a7a;border-right:none;border-radius:2px 0 0 2px;background:linear-gradient(90deg,#e4e4e4,#d6d6d6)"></div>
<div class="a" style="left:3px;top:317px;width:13px;height:19.5px;border:1px solid #7a7a7a;border-right:none;border-radius:2px 0 0 2px;background:linear-gradient(90deg,#e4e4e4,#d6d6d6)"></div>
<div class="a" style="left:3px;top:338px;width:13px;height:13px;border:1px solid #7a7a7a;border-right:none;border-radius:2px 0 0 2px;background:linear-gradient(90deg,#e4e4e4,#d6d6d6)"></div>
<div class="a" style="left:5px;top:353px;width:8px;height:7px;border:1px solid #9a9a9a;background:#ececec;font-size:5px;line-height:5px;text-align:center;color:#333"></div>
<div class="a" style="left:5px;top:361px;width:8px;height:7px;border:1px solid #9a9a9a;background:#ececec;font-size:5px;line-height:5px;text-align:center;color:#333"></div>
<div class="a" style="left:5px;top:369px;width:8px;height:7px;border:1px solid #9a9a9a;background:#ececec;font-size:5px;line-height:5px;text-align:center;color:#333"></div>
<div class="a" style="left:5px;top:377px;width:8px;height:7px;border:1px solid #9a9a9a;background:#ececec;font-size:5px;line-height:5px;text-align:center;color:#333"></div>
<div class="dd" style="left:7px;top:372px;border-left-width:2px;border-right-width:2px;border-top-width:2.5px"></div>
<div class="dd" style="left:7px;top:380px;border-left-width:2px;border-right-width:2px;border-top-width:2.5px"></div>
<div class="a" style="left:7px;top:356px;width:4px;height:1px;background:#666"></div><div class="a" style="left:7px;top:364px;width:4px;height:1px;background:#888"></div>
<svg class="a" style="left:0;top:0" width="20" height="400" viewBox="0 0 20 400"><defs><linearGradient id="rainbow" x1="0" y1="0" x2="0" y2="1"><stop offset="0" stop-color="#e02020"></stop><stop offset=".3" stop-color="#f0e020"></stop><stop offset=".6" stop-color="#20c040"></stop><stop offset="1" stop-color="#2040e0"></stop></linearGradient></defs><g transform="translate(4.00,109.00) scale(1.000)"><circle cx="3" cy="2.5" r="2" fill="#f8c020" stroke="#c08000" stroke-width="0.4"></circle><circle cx="4" cy="4" r="1.5" fill="#ffd040"></circle><path d="M3,5V11H8" stroke="#2040c0" stroke-width="0.9" fill="none"></path><circle cx="9.5" cy="9.5" r="2" fill="#f8c020" stroke="#c08000" stroke-width="0.4"></circle><path d="M3,8H8" stroke="#2040c0" stroke-width="0.7"></path></g><g transform="translate(4.00,130.00) scale(1.000)"><path d="M1,1L6,4L11,1V7L6,4L1,7Z" fill="#2050d0"></path><rect x="1" y="7.5" width="4.5" height="4" fill="#f8e020" stroke="#a08000" stroke-width="0.4"></rect><path d="M6.5,7.5L11,11.5H6.5Z" fill="#e02020"></path></g><g transform="translate(4.00,152.00) scale(1.000)"><rect x="1.5" y="0.5" width="4" height="4" rx="0.6" fill="#f0a0e0" stroke="#a03090" stroke-width="0.6"></rect><path d="M3.5,4.5V10H6" stroke="#7030b0" stroke-width="0.8" fill="none"></path><circle cx="8.5" cy="9.5" r="2.3" fill="#f0c0f0" stroke="#b03090" stroke-width="0.6"></circle><path d="M6,3H11" stroke="#808080" stroke-width="0.7"></path></g><g transform="translate(4.00,173.00) scale(1.000)"><circle cx="2" cy="1.5" r="1.3" fill="#2040c0"></circle><path d="M2,2.5V10" stroke="#4060c0" stroke-width="0.8"></path><path d="M3,4.5H11.5V10.5H3Z" fill="#e8e8f0" stroke="#8090a8" stroke-width="0.5"></path><path d="M4,7H10M4,9H8" stroke="#8090b0" stroke-width="0.6"></path></g><g transform="translate(4.00,194.50) scale(1.000)"><path d="M0.5,4L3,2V12L0.5,12Z" fill="#f08000"></path><path d="M3,4L5,2V12H3Z" fill="#ffa020"></path><path d="M5,4L7.5,2V12H5Z" fill="#30a040"></path><path d="M7.5,4L10,2V12H7.5Z" fill="#2070d0"></path><path d="M10,4L12,2V11L10,12Z" fill="#4090f0"></path></g><g transform="translate(4.00,222.25) scale(1.000)"><circle cx="5" cy="7.5" r="4.3" fill="#1a60d0"></circle><path d="M5,5.5V10M5,4V4.6" stroke="#fff" stroke-width="1.3"></path><path d="M7,2Q10,3 10.5,6M8,0.5Q12,1.5 12,5.5" stroke="#3070e0" stroke-width="1" fill="none"></path></g><g transform="translate(4.00,250.25) scale(1.000)"><path d="M2,0.5H8L11,3.5V11.5H2Z" fill="#fff" stroke="#4070d0" stroke-width="0.7"></path><circle cx="6.5" cy="7.5" r="3" fill="#30a060" stroke="#2060c0" stroke-width="0.6"></circle><circle cx="6.5" cy="7" r="1.2" fill="#a0e0a0"></circle></g><g transform="translate(4.00,278.00) scale(1.000)"><circle cx="6" cy="6" r="5.3" fill="#e8eaf0" stroke="#7080a0" stroke-width="0.9"></circle><circle cx="6" cy="6" r="4" fill="#fff"></circle><path d="M6,2.5V6H9" stroke="#202020" stroke-width="1" fill="none"></path></g><g transform="translate(4.00,299.75) scale(1.000)"><rect x="0.8" y="2.5" width="2.5" height="8" fill="#f0f0f0" stroke="#909090" stroke-width="0.5"></rect><rect x="3.5" y="1" width="8" height="9" fill="#fff" stroke="#a0a0a0" stroke-width="0.5"></rect><rect x="4.5" y="2.5" width="2" height="1.5" fill="#3060d0"></rect><rect x="4.5" y="4.8" width="2" height="1.5" fill="#30a040"></rect><rect x="4.5" y="7" width="2" height="1.5" fill="#e03030"></rect><path d="M7.5,3.2H10.5M7.5,5.5H10.5M7.5,7.7H10.5" stroke="#808080" stroke-width="0.5"></path></g><g transform="translate(4.00,320.75) scale(1.000)"><rect x="1" y="0.5" width="3.5" height="11" fill="url(#rainbow)"></rect><path d="M6,2L11,11" stroke="#202020" stroke-width="1.3"></path></g><g transform="translate(4.00,338.50) scale(1.000)"><rect x="1" y="3" width="2.5" height="7" fill="#2060d0"></rect><circle cx="2.2" cy="2" r="1.2" fill="#2060d0"></circle><path d="M4,7Q7,4 12,5V10H5Z" fill="#c0d8f0" stroke="#3060c0" stroke-width="0.6"></path></g></svg>
<div class="a" style="left:16px;top:95px;width:129px;height:291px;background:#e8e8e8;border-left:1px solid #c8c8c8;border-top:1px solid #d0d0d0"></div>
<div class="a" style="left:143px;top:95px;width:2px;height:291px;background:#6a6a6a"></div>
<div class="ic" style="left:24px;top:101px;width:5px;height:5px;background:linear-gradient(135deg,#d0e040 0,#d0e040 30%,#202020 31%,#404040);border-radius:50%"></div>
<div class="t" style="left: 36.5px; top: 99.275px; font-size: 6.5px; line-height: 8.45px; color: rgb(17, 17, 17); text-shadow: rgba(0, 0, 0, 0.8) 0px 0px 0.35px; font-weight: bold; display: inline-block; white-space: nowrap; transform: scaleX(0.9286); transform-origin: 0px 50%; width: 35.5px; overflow: hidden;">部件导航器</div>
<div class="a" style="left:21px;top:111px;width:118px;height:267px;background:#fff;border:1px solid #909090"></div>
<div class="a" style="left:22px;top:112px;width:116px;height:10px;background:linear-gradient(#fafafa,#e4e4e4);border-bottom:1px solid #b8b8b8"></div>
<div class="a" style="left:125px;top:112px;width:1px;height:10px;background:#c0c0c0"></div>
<div class="t" style="left: 25px; top: 112.775px; font-size: 6.5px; line-height: 8.45px; color: rgb(34, 34, 34); text-shadow: rgba(0, 0, 0, 0.8) 0px 0px 0.35px; display: inline-block; white-space: nowrap; transform: scaleX(0.8571); transform-origin: 0px 50%; width: 14.5px; overflow: hidden;">名称</div>
<div class="a" style="left:45px;top:115px;width:0;height:0;border-left:2.5px solid transparent;border-right:2.5px solid transparent;border-bottom:3.5px solid #111"></div>
<div class="t" style="left: 127px; top: 112.775px; font-size: 6.5px; line-height: 8.45px; color: rgb(34, 34, 34); text-shadow: rgba(0, 0, 0, 0.8) 0px 0px 0.35px; clip-path: inset(0px); display: inline-block; white-space: nowrap; transform: scaleX(0.7857); transform-origin: 0px 50%; width: 14.5px; overflow: hidden;">测试</div>
<div class="a" style="left:22px;top:131.0px;width:116px;height:10.3px;background:#f3f3f3"></div>
<div class="a" style="left:22px;top:130.5px;width:116px;height:1px;background:#e2e2e2"></div>
<div class="a" style="left:22px;top:140.8px;width:116px;height:1px;background:#e2e2e2"></div>
<div class="a" style="left:22px;top:151.6px;width:116px;height:10.3px;background:#f3f3f3"></div>
<div class="a" style="left:22px;top:151.1px;width:116px;height:1px;background:#e2e2e2"></div>
<div class="a" style="left:22px;top:161.4px;width:116px;height:1px;background:#e2e2e2"></div>
<div class="a" style="left:22px;top:172.2px;width:116px;height:10.3px;background:#f3f3f3"></div>
<div class="a" style="left:22px;top:171.7px;width:116px;height:1px;background:#e2e2e2"></div>
<div class="a" style="left:22px;top:182.0px;width:116px;height:1px;background:#e2e2e2"></div>
<div class="a" style="left:22px;top:192.8px;width:116px;height:10.3px;background:#f3f3f3"></div>
<div class="a" style="left:22px;top:192.3px;width:116px;height:1px;background:#e2e2e2"></div>
<div class="a" style="left:22px;top:202.6px;width:116px;height:1px;background:#e2e2e2"></div>
<div class="a" style="left:22px;top:213.4px;width:116px;height:10.3px;background:#f3f3f3"></div>
<div class="a" style="left:22px;top:212.9px;width:116px;height:1px;background:#e2e2e2"></div>
<div class="a" style="left:22px;top:223.2px;width:116px;height:1px;background:#e2e2e2"></div>
<div class="a" style="left:22px;top:234.0px;width:116px;height:10.3px;background:#f3f3f3"></div>
<div class="a" style="left:22px;top:233.5px;width:116px;height:1px;background:#e2e2e2"></div>
<div class="a" style="left:22px;top:243.8px;width:116px;height:1px;background:#e2e2e2"></div>
<div class="a" style="left:22px;top:254.6px;width:116px;height:10.3px;background:#f3f3f3"></div>
<div class="a" style="left:22px;top:254.1px;width:116px;height:1px;background:#e2e2e2"></div>
<div class="a" style="left:22px;top:264.4px;width:116px;height:1px;background:#e2e2e2"></div>
<div class="a" style="left:22px;top:275.2px;width:116px;height:10.3px;background:#f3f3f3"></div>
<div class="a" style="left:22px;top:274.7px;width:116px;height:1px;background:#e2e2e2"></div>
<div class="a" style="left:22px;top:285.0px;width:116px;height:1px;background:#e2e2e2"></div>
<div class="a" style="left:22px;top:295.8px;width:116px;height:10.3px;background:#f3f3f3"></div>
<div class="a" style="left:22px;top:295.3px;width:116px;height:1px;background:#e2e2e2"></div>
<div class="a" style="left:22px;top:305.6px;width:116px;height:1px;background:#e2e2e2"></div>
<div class="a" style="left:22px;top:316.4px;width:116px;height:10.3px;background:#f3f3f3"></div>
<div class="a" style="left:22px;top:315.9px;width:116px;height:1px;background:#e2e2e2"></div>
<div class="a" style="left:22px;top:326.2px;width:116px;height:1px;background:#e2e2e2"></div>
<div class="a" style="left:22px;top:337.0px;width:116px;height:10.3px;background:#f3f3f3"></div>
<div class="a" style="left:22px;top:336.5px;width:116px;height:1px;background:#e2e2e2"></div>
<div class="a" style="left:22px;top:346.8px;width:116px;height:1px;background:#e2e2e2"></div>
<div class="a" style="left:22px;top:357.6px;width:116px;height:10.3px;background:#f3f3f3"></div>
<div class="a" style="left:22px;top:357.1px;width:116px;height:1px;background:#e2e2e2"></div>
<div class="a" style="left:22px;top:367.4px;width:116px;height:1px;background:#e2e2e2"></div>
<div class="a" style="left:124.5px;top:122px;width:1px;height:246px;background:#ececec"></div>
<div class="a" style="left:26px;top:124px;width:1px;height:44px;background:repeating-linear-gradient(#a0a0a0 0 1px,transparent 1px 2px)"></div>
<div class="a" style="left:26px;top:126.5px;width:5px;height:1px;background:repeating-linear-gradient(90deg,#a0a0a0 0 1px,transparent 1px 2px)"></div>
<div class="a" style="left:26px;top:157.4px;width:5px;height:1px;background:repeating-linear-gradient(90deg,#a0a0a0 0 1px,transparent 1px 2px)"></div>
<div class="a" style="left:28px;top:136.8px;width:3px;height:1px;background:repeating-linear-gradient(90deg,#a0a0a0 0 1px,transparent 1px 2px)"></div>
<div class="a" style="left:28px;top:147px;width:4px;height:1px;background:repeating-linear-gradient(90deg,#a0a0a0 0 1px,transparent 1px 2px)"></div>
<div class="a" style="left:36px;top:172px;width:1px;height:57.5px;background:repeating-linear-gradient(#a0a0a0 0 1px,transparent 1px 2px)"></div>
<div class="a" style="left:36px;top:177.7px;width:6px;height:1px;background:repeating-linear-gradient(90deg,#a0a0a0 0 1px,transparent 1px 2px)"></div>
<div class="a" style="left:36px;top:188px;width:6px;height:1px;background:repeating-linear-gradient(90deg,#a0a0a0 0 1px,transparent 1px 2px)"></div>
<div class="a" style="left:36px;top:198.3px;width:6px;height:1px;background:repeating-linear-gradient(90deg,#a0a0a0 0 1px,transparent 1px 2px)"></div>
<div class="a" style="left:36px;top:208.6px;width:6px;height:1px;background:repeating-linear-gradient(90deg,#a0a0a0 0 1px,transparent 1px 2px)"></div>
<div class="a" style="left:36px;top:218.9px;width:6px;height:1px;background:repeating-linear-gradient(90deg,#a0a0a0 0 1px,transparent 1px 2px)"></div>
<div class="a" style="left:36px;top:229.2px;width:6px;height:1px;background:repeating-linear-gradient(90deg,#a0a0a0 0 1px,transparent 1px 2px)"></div>
<div class="a" style="left:23.5px;top:134.3px;width:5px;height:5px;border:1px solid #8a8a8a;background:#fff"></div>
<div class="a" style="left:24.5px;top:136.3px;width:3px;height:1px;background:#333"></div>
<div class="a" style="left:25.5px;top:135.3px;width:1px;height:3px;background:#333"></div>
<div class="a" style="left:23.5px;top:144.5px;width:5px;height:5px;border:1px solid #8a8a8a;background:#fff"></div>
<div class="a" style="left:24.5px;top:146.5px;width:3px;height:1px;background:#333"></div>
<div class="a" style="left:25.5px;top:145.5px;width:1px;height:3px;background:#333"></div>
<div class="a" style="left:23.5px;top:165.2px;width:5px;height:5px;border:1px solid #8a8a8a;background:#fff"></div>
<div class="a" style="left:24.5px;top:167.2px;width:3px;height:1px;background:#333"></div>
<div class="t" style="left: 41.3px; top: 122.275px; font-size: 6.5px; line-height: 8.45px; color: rgb(26, 26, 26); text-shadow: rgba(0, 0, 0, 0.8) 0px 0px 0.35px; display: inline-block; white-space: nowrap; transform: scaleX(0.8738); transform-origin: 0px 50%; width: 42.5px; overflow: hidden;">历史记录模式</div>
<div class="t" style="left: 41.3px; top: 132.575px; font-size: 6.5px; line-height: 8.45px; color: rgb(26, 26, 26); text-shadow: rgba(0, 0, 0, 0.8) 0px 0px 0.35px; display: inline-block; white-space: nowrap; transform: scaleX(0.8821); transform-origin: 0px 50%; width: 28.5px; overflow: hidden;">模型视图</div>
<div class="t" style="left: 49.5px; top: 142.775px; font-size: 6.5px; line-height: 8.45px; color: rgb(26, 26, 26); text-shadow: rgba(0, 0, 0, 0.8) 0px 0px 0.35px; display: inline-block; white-space: nowrap; transform: scaleX(0.8571); transform-origin: 0px 50%; width: 21.5px; overflow: hidden;">摄像机</div>
<div class="t" style="left: 41.3px; top: 153.175px; font-size: 6.5px; line-height: 8.45px; color: rgb(26, 26, 26); text-shadow: rgba(0, 0, 0, 0.8) 0px 0px 0.35px; display: inline-block; white-space: nowrap; transform: scaleX(0.8771); transform-origin: 0px 50%; width: 35.5px; overflow: hidden;">用户表达式</div>
<div class="t" style="left: 41.3px; top: 163.475px; font-size: 6.5px; line-height: 8.45px; color: rgb(26, 26, 26); text-shadow: rgba(0, 0, 0, 0.8) 0px 0px 0.35px; display: inline-block; white-space: nowrap; transform: scaleX(0.8738); transform-origin: 0px 50%; width: 42.5px; overflow: hidden;">模型历史记录</div>
<div class="t" style="left: 59px; top: 173.475px; font-size: 6.5px; line-height: 8.45px; color: rgb(26, 26, 26); text-shadow: rgba(0, 0, 0, 0.8) 0px 0px 0.35px; display: inline-block; white-space: nowrap; transform: scaleX(0.9117); transform-origin: 0px 50%; width: 45.3px; overflow: hidden;">基准坐标系 (0)</div>
<div class="t" style="left: 59px; top: 183.775px; font-size: 6.5px; line-height: 8.45px; color: rgb(26, 26, 26); text-shadow: rgba(0, 0, 0, 0.8) 0px 0px 0.35px; display: inline-block; white-space: nowrap; transform: scaleX(0.9484); transform-origin: 0px 50%; width: 63.8px; overflow: hidden;">草图 (1) "SKETCH_...</div>
<div class="t" style="left: 59px; top: 194.075px; font-size: 6.5px; line-height: 8.45px; color: rgb(26, 26, 26); text-shadow: rgba(0, 0, 0, 0.8) 0px 0px 0.35px; display: inline-block; white-space: nowrap; transform: scaleX(0.9484); transform-origin: 0px 50%; width: 63.8px; overflow: hidden;">草图 (2) "SKETCH_...</div>
<div class="t" style="left: 59px; top: 204.375px; font-size: 6.5px; line-height: 8.45px; color: rgb(26, 26, 26); text-shadow: rgba(0, 0, 0, 0.8) 0px 0px 0.35px; display: inline-block; white-space: nowrap; transform: scaleX(0.9558); transform-origin: 0px 50%; width: 24.3px; overflow: hidden;">拉伸 (3)</div>
<div class="t" style="left: 59px; top: 214.675px; font-size: 6.5px; line-height: 8.45px; color: rgb(26, 26, 26); text-shadow: rgba(0, 0, 0, 0.8) 0px 0px 0.35px; display: inline-block; white-space: nowrap; transform: scaleX(0.9366); transform-origin: 0px 50%; width: 31.3px; overflow: hidden;">倒斜角 (4)</div>
<div class="t" style="left: 59px; top: 224.975px; font-size: 6.5px; line-height: 8.45px; color: rgb(26, 26, 26); text-shadow: rgba(0, 0, 0, 0.8) 0px 0px 0.35px; display: inline-block; white-space: nowrap; transform: scaleX(0.9558); transform-origin: 0px 50%; width: 24.3px; overflow: hidden;">拉伸 (5)</div>
<svg class="a" style="left:0;top:0" width="150" height="250" viewBox="0 0 150 250"><g transform="translate(30.50,121.80) scale(0.750)"><circle cx="6" cy="6" r="5.3" fill="#dce4f4" stroke="#405070" stroke-width="1"></circle><circle cx="6" cy="6" r="3.8" fill="#f8faff"></circle><path d="M6,2.6V6H8.8" stroke="#203050" stroke-width="1" fill="none"></path><path d="M2,9.5Q6,12 10,9.5" stroke="#90a8d0" stroke-width="1" fill="none"></path></g><g transform="translate(30.50,132.25) scale(0.792)"><circle cx="6" cy="6" r="5.3" fill="#20a088" stroke="#107060" stroke-width="0.6"></circle><ellipse cx="6" cy="6" rx="3.5" ry="2" fill="#e8fff8"></ellipse><circle cx="6" cy="6" r="1.2" fill="#20a088"></circle><path d="M8,10L11.5,8.5L11,11.5Z" fill="#f06030"></path></g><g transform="translate(32.00,143.05) scale(0.625)"><path d="M1,6.5L4.5,10.5L11,2" stroke="#18a018" stroke-width="2.3" fill="none"></path></g><g transform="translate(39.50,143.00) scale(0.667)"><rect x="1" y="1.5" width="10" height="9" rx="2" fill="#f4c0d0" stroke="#e06040" stroke-width="0.6"></rect><path d="M2,3L8,2L10,9L3,10Z" fill="#a0c8f0" stroke="#5070c0" stroke-width="0.5"></path><path d="M7,4L11,7L8,10Z" fill="#e040b0"></path></g><g transform="translate(31.00,153.50) scale(0.750)"><path d="M0.8,3H4L5,2H10V10.5H0.8Z" fill="#e0a820" stroke="#605020" stroke-width="0.6"></path><path d="M2.5,5.5H11.8L10,10.8H0.8Z" fill="#ffe060" stroke="#705810" stroke-width="0.6"></path><rect x="5" y="0" width="5" height="3" fill="#a0a0c0"></rect></g><g transform="translate(31.00,163.80) scale(0.750)"><path d="M0.8,3H4L5,2H10V10.5H0.8Z" fill="#e0a820" stroke="#605020" stroke-width="0.6"></path><path d="M2.5,5.5H11.8L10,10.8H0.8Z" fill="#ffe060" stroke="#705810" stroke-width="0.6"></path></g><g transform="translate(42.00,174.45) scale(0.542)"><rect x="1" y="1" width="10" height="10" fill="#fff" stroke="#303030" stroke-width="1.1"></rect><path d="M2.5,6L5,9L10,2.5" stroke="#10a010" stroke-width="2.2" fill="none"></path></g><g transform="translate(49.00,173.45) scale(0.708)"><path d="M2,1V11M2,11H10" stroke="#3040c0" stroke-width="1"></path><path d="M2,11L9,4" stroke="#303030" stroke-width="0.8"></path><path d="M5,4L8,7M8,4L5,7" stroke="#303030" stroke-width="0.7"></path><path d="M9,8Q11,9 9.5,11" stroke="#30a040" stroke-width="0.9" fill="none"></path></g><g transform="translate(42.00,184.75) scale(0.542)"><rect x="1" y="1" width="10" height="10" fill="#fff" stroke="#303030" stroke-width="1.1"></rect><path d="M2.5,6L5,9L10,2.5" stroke="#10a010" stroke-width="2.2" fill="none"></path></g><g transform="translate(49.00,183.75) scale(0.708)"><rect x="1" y="4" width="6.5" height="7" fill="#fff" stroke="#303030" stroke-width="0.9"></rect><path d="M1,4V1H4" stroke="#303030" stroke-width="0.9" fill="none"></path><path d="M5,8L10.5,1.5" stroke="#e0b000" stroke-width="1.6"></path><path d="M4.5,9L5.5,7.5" stroke="#303030" stroke-width="1"></path></g><g transform="translate(42.00,195.05) scale(0.542)"><rect x="1" y="1" width="10" height="10" fill="#fff" stroke="#303030" stroke-width="1.1"></rect><path d="M2.5,6L5,9L10,2.5" stroke="#10a010" stroke-width="2.2" fill="none"></path></g><g transform="translate(49.00,194.05) scale(0.708)"><rect x="1" y="4" width="6.5" height="7" fill="#fff" stroke="#303030" stroke-width="0.9"></rect><path d="M1,4V1H4" stroke="#303030" stroke-width="0.9" fill="none"></path><path d="M5,8L10.5,1.5" stroke="#e0b000" stroke-width="1.6"></path><path d="M4.5,9L5.5,7.5" stroke="#303030" stroke-width="1"></path></g><g transform="translate(42.00,205.35) scale(0.542)"><rect x="1" y="1" width="10" height="10" fill="#fff" stroke="#303030" stroke-width="1.1"></rect><path d="M2.5,6L5,9L10,2.5" stroke="#10a010" stroke-width="2.2" fill="none"></path></g><g transform="translate(49.00,204.35) scale(0.708)"><path d="M1,3L4,1.5V10.5L1,12Z" fill="#e07000"></path><path d="M4,1.5H11V10.5H4Z" fill="#ffb030" stroke="#b05000" stroke-width="0.5"></path><path d="M6,2V10M8.5,2V10" stroke="#d06000" stroke-width="0.7"></path><path d="M1,12L11,10.5" stroke="#2050c0" stroke-width="1.2"></path></g><g transform="translate(42.00,215.65) scale(0.542)"><rect x="1" y="1" width="10" height="10" fill="#fff" stroke="#303030" stroke-width="1.1"></rect><path d="M2.5,6L5,9L10,2.5" stroke="#10a010" stroke-width="2.2" fill="none"></path></g><g transform="translate(49.00,214.65) scale(0.708)"><path d="M1,6L6,2L11,5L10,9L5,11L1,9Z" fill="#f8b040" stroke="#b07020" stroke-width="0.5"></path><path d="M1,6L6,2L11,5L6,7Z" fill="#5a90f0"></path><path d="M6,7L11,5" stroke="#3060c0" stroke-width="0.8"></path><path d="M2,3L5,1" stroke="#e04040" stroke-width="0.8"></path></g><g transform="translate(42.00,225.95) scale(0.542)"><rect x="1" y="1" width="10" height="10" fill="#fff" stroke="#303030" stroke-width="1.1"></rect><path d="M2.5,6L5,9L10,2.5" stroke="#10a010" stroke-width="2.2" fill="none"></path></g><g transform="translate(49.00,224.95) scale(0.708)"><path d="M1,3L4,1.5V10.5L1,12Z" fill="#e07000"></path><path d="M4,1.5H11V10.5H4Z" fill="#ffb030" stroke="#b05000" stroke-width="0.5"></path><path d="M6,2V10M8.5,2V10" stroke="#d06000" stroke-width="0.7"></path><path d="M1,12L11,10.5" stroke="#2050c0" stroke-width="1.2"></path></g></svg>
<div class="a" style="left:22px;top:369px;width:116px;height:8px;background:#f0f0f0"></div>
<div class="a" style="left:31.5px;top:369.5px;width:72.5px;height:7px;border:1px solid #a8a8a8;border-radius:2px;background:linear-gradient(#fbfbfb,#dadada)"></div>
<div class="a" style="left:64px;top:371.5px;width:5px;height:3px;background:repeating-linear-gradient(90deg,#888 0 1px,transparent 1px 2px)"></div>
<div class="a" style="left:25px;top:371px;width:0;height:0;border-top:2px solid transparent;border-bottom:2px solid transparent;border-right:2px solid #555"></div>
<div class="a" style="left:132.5px;top:371px;width:0;height:0;border-top:2px solid transparent;border-bottom:2px solid transparent;border-left:2px solid #555"></div>
<div class="a" style="left:70px;top:380px;width:20px;height:3px;border:1px solid #b0b0b0;border-radius:1px;background:#dadada"></div>
<div class="a" style="left:145px;top:95px;width:552px;height:291px;background:linear-gradient(#b3b5b6 0%,#c2c4c5 25%,#d7d8d9 55%,#e4e5e7 78%,#e8e9eb 100%)"></div>
<div class="a" style="left:697px;top:95px;width:3px;height:291px;background:linear-gradient(90deg,#909090,#b8b8b8)"></div>
<svg class="a" style="left:0;top:0" width="700" height="465" viewBox="0 0 700 465">
<g stroke-linejoin="round">
<polygon points="255.7,211.4 275.5,205.4 516.1,320.9 516.1,352.5 255.7,230" fill="#925700"></polygon>
<polygon points="596.9,230.5 596.9,263.7 516.1,352.5 516.1,320.9" fill="#c97700"></polygon>
<polygon points="335.3,121.5 354.5,115 275.5,205.4 255.7,211.4" fill="#fd9d05"></polygon>
<polygon points="354.5,115 596.9,230.5 516.1,320.9 275.5,205.4" fill="#ffc300"></polygon>
<polygon points="314.1,193 341,162.4 341,195.6 334.4,202.2" fill="#c47400"></polygon>
<polygon points="341,162.4 399,189.9 379.5,211.1 355.9,200.8 341,195.6" fill="#905600"></polygon>
<polygon points="334.4,202.2 341,195.6 355.9,200.8 349.1,209.4" fill="#e2e5e8"></polygon>
<polyline points="314.1,193 341,162.4 399,189.9 379.5,211.1 355.9,200.8 341,195.6 341,162.4" fill="none" stroke="#5a3800" stroke-width="0.7"></polyline>
<polyline points="314.1,193 349.1,209.4" fill="none" stroke="#5a3800" stroke-width="0.6"></polyline>
<polyline points="335.3,121.5 354.5,115 596.9,230.5" fill="none" stroke="#4a4a6a" stroke-width="0.8"></polyline>
<polyline points="354.5,115 275.5,205.4 255.7,211.4" fill="none" stroke="#6a4000" stroke-width="0.6"></polyline>
<polyline points="275.5,205.4 516.1,320.9 596.9,230.5" fill="none" stroke="#6a4000" stroke-width="0.6"></polyline>
<polyline points="516.1,320.9 516.1,352.5" fill="none" stroke="#6a4000" stroke-width="0.5"></polyline>
<polyline points="335.3,121.5 255.7,211.4" fill="none" stroke="#8a8aa0" stroke-width="0.6"></polyline><polyline points="255.7,211.4 255.7,230" fill="none" stroke="#604000" stroke-width="0.6"></polyline><polyline points="255.7,230 516.1,352.5 596.9,263.7" fill="none" stroke="#3a60f0" stroke-width="1.3"></polyline>
</g>
<g stroke="#f8e8a8" stroke-width="0.6" fill="none" opacity="0.6">
<path d="M426,214V247M426,223L444.4,201.5V225.2M426,223L472.4,239.1L455.2,260.6M426,247L455.2,260.6V234.8M426,247L483,273.5M444.4,225.2L464.8,201.5"></path>
</g>
<path d="M426,214V204" stroke="#2a2a80" stroke-width="1.2"></path>
<path d="M424,206L426.5,199L429,206Z" fill="#1a2ad0"></path>
<text x="424.5" y="198.5" font-size="6" fill="#303060" font-family="Liberation Sans">Z</text>
<text x="486" y="277" font-size="5" fill="#f4e8b8" font-family="Liberation Sans">X</text>
<text x="463" y="203" font-size="5" fill="#f4e8b8" font-family="Liberation Sans">Y</text>
<path d="M475,269L481,272.5L474.5,272Z" fill="#fff"></path>
<path d="M456,209L462,205L458,211Z" fill="#fff"></path>
<circle cx="332.7" cy="194.7" r="4.5" fill="none" stroke="#8a7050" stroke-width="1"></circle>
<path d="M326.5,194.7H339M332.7,188.5V201" stroke="#555" stroke-width="0.9"></path>
<!-- view triad -->
<g>
<polygon points="173,351 180,346 184,350 184,358 177,362 172,358" fill="#d4d6d6" stroke="#b0b0b0" stroke-width="0.6"></polygon>
<path d="M173,351L177,355L184,350M177,355V362" stroke="#b8b8b8" stroke-width="0.5" fill="none"></path>
<path d="M170,361V347" stroke="#1a3ad0" stroke-width="1.8"></path>
<path d="M169.5,361L186,369" stroke="#e03030" stroke-width="1.3"></path>
<text x="167.5" y="347" font-size="5" fill="#2040d0" font-weight="bold" font-family="Liberation Sans">Z</text>
<text x="185" y="372" font-size="5" fill="#e03030" font-family="Liberation Sans">X</text>
<text x="179" y="349" font-size="4" fill="#30a040" font-family="Liberation Sans">Y</text>
<circle cx="170" cy="361" r="1.5" fill="#888"></circle>
</g>
</svg>
<div class="a" style="left:0;top:386px;width:700px;height:16px;background:linear-gradient(#c4c4c4 0,#8c8c8c 1.5px,#606060 2.2px,#949494 3px,#909090 100%)"></div>
<div class="a" style="left:0;top:402px;width:700px;height:12px;background:linear-gradient(#666 0,#929292 1px,#8e8e8e 100%)"></div>
<div class="a" style="left:3px;top:391px;width:72px;height:9px;border:1px solid #606060;background:linear-gradient(#c0c0c0,#aeaeae)"></div>
<div class="a" style="left:66px;top:391.5px;width:8.5px;height:8px;background:linear-gradient(#90c0f0,#4a80c8);border:1px solid #3a6090"></div>
<div class="a" style="left:68px;top:394.5px;width:0;height:0;border-left:2.5px solid transparent;border-right:2.5px solid transparent;border-top:3px solid #111"></div>
<div class="t" style="left: 5px; top: 391.275px; font-size: 6.5px; line-height: 8.45px; color: rgb(26, 26, 26); text-shadow: rgba(0, 0, 0, 0.8) 0px 0px 0.35px; display: inline-block; white-space: nowrap; transform: scaleX(0.9388); transform-origin: 0px 50%; width: 49.5px; overflow: hidden;">没有选择过滤器</div>
<div class="a" style="left:79px;top:391px;width:76px;height:9px;border:1px solid #606060;background:linear-gradient(#c0c0c0,#aeaeae)"></div>
<div class="a" style="left:146px;top:391.5px;width:8.5px;height:8px;background:linear-gradient(#90c0f0,#4a80c8);border:1px solid #3a6090"></div>
<div class="a" style="left:148px;top:394.5px;width:0;height:0;border-left:2.5px solid transparent;border-right:2.5px solid transparent;border-top:3px solid #111"></div>
<div class="t" style="left: 81px; top: 391.275px; font-size: 6.5px; line-height: 8.45px; color: rgb(26, 26, 26); text-shadow: rgba(0, 0, 0, 0.8) 0px 0px 0.35px; display: inline-block; white-space: nowrap; transform: scaleX(0.8929); transform-origin: 0px 50%; width: 28.5px; overflow: hidden;">整个装配</div>
<div class="ic" style="left:159px;top:389.5px;width:10px;height:10.5px;background:radial-gradient(circle,#c0c0c0 0,#909090 60%,transparent 64%);"></div>
<div class="a" style="left:173px;top:389px;width:1px;height:12px;background:#8a8a8a;box-shadow:1px 0 0 #bcbcbc"></div>
<div class="ic" style="left:175px;top:389.5px;width:9px;height:10.5px;background:linear-gradient(135deg,transparent 30%,#8a8a8a 31%,#a0a0a0 60%,transparent 61%);"></div>
<div class="ic" style="left:185px;top:389.5px;width:12px;height:10.5px;background:radial-gradient(circle,#f0c000 0,#e04040 40%,#ffffff 41%,#d0d0d0);border:1px solid #d04040"></div>
<div class="dd" style="left:197.0px;top:393px;border-top-color:#222"></div>
<div class="ic" style="left:203px;top:389.5px;width:8px;height:10.5px;background:linear-gradient(135deg,transparent 30%,#8a8a8a 31%,#a0a0a0 60%,transparent 61%);"></div>
<div class="ic" style="left:212px;top:389.5px;width:10px;height:10.5px;background:linear-gradient(135deg,transparent 30%,#8a8a8a 31%,#a0a0a0 60%,transparent 61%);"></div>
<div class="a" style="left:226px;top:389px;width:1px;height:12px;background:#8a8a8a;box-shadow:1px 0 0 #bcbcbc"></div>
<div class="ic" style="left:228px;top:389.5px;width:10px;height:10.5px;background:transparent;border:1px dashed #303030"></div>
<div class="ic" style="left:228px;top:389.5px;width:2px;height:2.0px;background:#e03030;"></div>
<div class="ic" style="left:236px;top:398px;width:2px;height:2px;background:#e03030;"></div>
<div class="dd" style="left:240.5px;top:393px;border-top-color:#222"></div>
<div class="a" style="left:246px;top:389px;width:1px;height:12px;background:#8a8a8a;box-shadow:1px 0 0 #bcbcbc"></div>
<div class="ic" style="left:250px;top:389.5px;width:10px;height:10.5px;background:radial-gradient(ellipse,#f0f0f0 0,#a0a0b0 50%,#505060 60%,transparent 64%);"></div>
<div class="ic" style="left:262px;top:389.5px;width:9px;height:10.5px;background:linear-gradient(135deg,#80c0ff,#2a60d0);border-radius:2px"></div>
<div class="a" style="left:275px;top:389px;width:1px;height:12px;background:#8a8a8a;box-shadow:1px 0 0 #bcbcbc"></div>
<div class="a" style="left:277px;top:388.5px;width:11px;height:12.5px;border:1px solid #5a5a5a;background:#a8a8a8"></div>
<div class="ic" style="left:279px;top:389.5px;width:8px;height:10.5px;background:radial-gradient(circle at 30% 30%,#30b040 0,#30b040 20%,transparent 22%),radial-gradient(circle at 70% 70%,#e03030 0,#e03030 20%,transparent 22%),radial-gradient(circle,#f0d000 0,#f0d000 25%,transparent 28%);"></div>
<div class="ic" style="left:289px;top:389.5px;width:9px;height:10.5px;background:linear-gradient(135deg,#20a0a0 0,#2060d0 40%,#f0d000 60%,#303030);border-radius:40%"></div>
<div class="a" style="left:299px;top:388.5px;width:12px;height:12.5px;border:1px solid #5a5a5a;background:#a8a8a8"></div>
<div class="a" style="left:311px;top:388.5px;width:11px;height:12.5px;border:1px solid #5a5a5a;background:#a8a8a8"></div>
<div class="a" style="left:301px;top:394.5px;width:9px;height:1.2px;background:#b02020;transform:rotate(-45deg)"></div>
<div class="a" style="left:313px;top:394.5px;width:9px;height:1.2px;background:#b02020;transform:rotate(-45deg)"></div>
<div class="ic" style="left:324px;top:389.5px;width:9px;height:10.5px;background:linear-gradient(135deg,transparent 30%,#303030 31%,#303030 40%,transparent 41%);"></div>
<div class="ic" style="left:330px;top:396px;width:3px;height:3px;background:#e03030;border-radius:50%"></div>
<div class="ic" style="left:336px;top:389.5px;width:10px;height:10.5px;background:radial-gradient(circle,transparent 40%,#505050 41%,#505050 50%,transparent 51%);"></div>
<div class="a" style="left:346px;top:388.5px;width:11px;height:12.5px;border:1px solid #5a5a5a;background:#a8a8a8"></div>
<div class="ic" style="left:348px;top:389.5px;width:8px;height:10.5px;background:radial-gradient(circle,#e02020 0,#e02020 25%,transparent 27%,transparent 45%,#303030 46%,#303030 55%,transparent 57%);"></div>
<div class="ic" style="left:358px;top:389.5px;width:10px;height:10.5px;background:radial-gradient(circle,transparent 40%,#d03030 41%,#d03030 55%,transparent 57%);"></div>
<div class="a" style="left:369px;top:389px;width:1px;height:12px;background:#8a8a8a;box-shadow:1px 0 0 #bcbcbc"></div>
<div class="a" style="left:370px;top:388.5px;width:11px;height:12.5px;border:1px solid #5a5a5a;background:#a8a8a8"></div>
<div class="a" style="left:381px;top:388.5px;width:12px;height:12.5px;border:1px solid #5a5a5a;background:#a8a8a8"></div>
<div class="a" style="left:371.5px;top:394px;width:8px;height:1.2px;background:#303030"></div><div class="a" style="left:375px;top:390.5px;width:1.2px;height:8px;background:#303030"></div>
<div class="a" style="left:383px;top:394.5px;width:9px;height:1.2px;background:#303030;transform:rotate(-45deg)"></div>
<div class="ic" style="left:395px;top:389.5px;width:10px;height:10.5px;background:radial-gradient(circle at 40% 40%,#ffffff 0,#60a0f0 30%,#2050c0 60%,transparent 64%);"></div>
<div class="ic" style="left:400px;top:395px;width:4px;height:4px;background:#e03030;border-radius:50%"></div>
<div class="a" style="left:408px;top:389px;width:1px;height:12px;background:#8a8a8a;box-shadow:1px 0 0 #bcbcbc"></div>
<div class="ic" style="left:410px;top:389.5px;width:7px;height:10.5px;background:linear-gradient(135deg,#a03030,#502020);border-radius:1px"></div>
<div class="t" style="left: 330px; top: 396.45px; font-size: 7px; line-height: 9.1px; color: rgba(255, 255, 255, 0.85); display: inline-block; white-space: nowrap; transform: scaleX(1.3571); transform-origin: 0px 50%; width: 28.5px; overflow: hidden;">看无曲线</div>
<div class="t" style="left:687px;top:387px;font-size:9px;line-height:10px;color:#e8e8e8">✕</div>
<div class="dd" style="left:695px;top:398px;border-top-color:#222"></div>
<div class="t" style="left: 2px; top: 402.775px; font-size: 6.5px; line-height: 8.45px; color: rgb(17, 17, 17); text-shadow: rgba(0, 0, 0, 0.8) 0px 0px 0.35px; display: inline-block; white-space: nowrap; transform: scaleX(0.9357); transform-origin: 0px 50%; width: 127.7px; overflow: hidden;">选择对象并使用 MB3，或者双击某一对象</div>
<div class="ic" style="left:672px;top:404px;width:8px;height:8px;background:linear-gradient(#909090,#707070);border:1px solid #606060"></div>
<div class="ic" style="left:682px;top:404px;width:8px;height:8px;background:linear-gradient(#ffffff,#e0e0e0);border:1.5px solid #303030"></div>
<div class="ic" style="left:684.5px;top:406.5px;width:3.0px;height:3.0px;background:#2a6ad0;"></div>
<div class="a" style="left:0;top:386px;width:25px;height:28px;background:rgba(70,140,230,0.28)"></div>
<div class="a" style="left:20px;top:386px;width:5px;height:28px;background:rgba(70,150,240,0.45)"></div>
<div class="a" style="left:0;top:414px;width:700px;height:15px;background:linear-gradient(#627280 0,#586874 50%,#4e5c66 100%);border-top:1px solid #3a4046"></div>
<div class="a" style="left:489px;top:415px;width:211px;height:14px;background:linear-gradient(#5c6a74,#4a5860);border-left:1px solid #3c464c"></div>
<div class="a" style="left:4px;top:413px;width:16px;height:16px;border-radius:50%;background:radial-gradient(circle at 50% 45%,#60c0f0 0,#2070c0 45%,#103060 75%,#203040 100%)"></div>
<div class="ic" style="left:8px;top:416px;width:4px;height:4px;background:#f04020;"></div>
<div class="ic" style="left:12px;top:416px;width:4px;height:4px;background:#40c040;"></div>
<div class="ic" style="left:8px;top:420px;width:4px;height:4px;background:#2080f0;"></div>
<div class="ic" style="left:12px;top:420px;width:4px;height:4px;background:#f0c020;"></div>
<div class="ic" style="left:30px;top:416px;width:8px;height:9px;background:radial-gradient(circle,transparent 35%,#2a8ae0 36%,#2a8ae0 60%,transparent 62%);"></div>
<div class="ic" style="left:43px;top:416px;width:7px;height:9px;background:linear-gradient(#2060d0 0,#2060d0 50%,#303840 51%);"></div>
<div class="ic" style="left:53px;top:416px;width:7px;height:9px;background:linear-gradient(#80b0f0,#2050b0);"></div>
<div class="a" style="left:79px;top:415.5px;width:77px;height:13px;border:1px solid #7a8086;border-radius:2px;background:linear-gradient(rgba(255,255,255,0.22),rgba(255,255,255,0.08))"></div>
<div class="ic" style="left:83px;top:417.5px;width:7px;height:7.5px;background:#f0c030;border-radius:1px"></div>
<div class="t" style="left: 93px; top: 417.275px; font-size: 6.5px; line-height: 8.45px; color: rgba(230, 235, 240, 0.75); display: inline-block; white-space: nowrap; transform: scaleX(1.0055); transform-origin: 0px 50%; width: 57.2px; overflow: hidden;">020 NX国标之管理</div>
<div class="a" style="left:159px;top:415.5px;width:81px;height:13px;border:1px solid #7a8086;border-radius:2px;background:linear-gradient(rgba(255,255,255,0.22),rgba(255,255,255,0.08))"></div>
<div class="ic" style="left:163px;top:417.5px;width:7px;height:7.5px;background:#f06030;border-radius:1px"></div>
<div class="t" style="left: 173px; top: 417.275px; font-size: 6.5px; line-height: 8.45px; color: rgba(230, 235, 240, 0.75); display: inline-block; white-space: nowrap; transform: scaleX(1.0633); transform-origin: 0px 50%; width: 55.1px; overflow: hidden;">Microsoft PowerPo</div>
<div class="a" style="left:243px;top:415.5px;width:79px;height:13px;border:1px solid #7a8086;border-radius:2px;background:linear-gradient(rgba(255,255,255,0.22),rgba(255,255,255,0.08))"></div>
<div class="ic" style="left:247px;top:417.5px;width:7px;height:7.5px;background:#e03020;border-radius:1px"></div>
<div class="t" style="left: 257px; top: 417.275px; font-size: 6.5px; line-height: 8.45px; color: rgba(230, 235, 240, 0.75); display: inline-block; white-space: nowrap; transform: scaleX(1.0348); transform-origin: 0px 50%; width: 56.6px; overflow: hidden;">PowerPoint 幻灯片</div>
<div class="a" style="left:325px;top:415.5px;width:80px;height:13px;border:1px solid #7a8086;border-radius:2px;background:linear-gradient(rgba(255,255,255,0.22),rgba(255,255,255,0.08))"></div>
<div class="ic" style="left:329px;top:417.5px;width:7px;height:7.5px;background:#d03030;border-radius:1px"></div>
<div class="t" style="left: 339px; top: 417.275px; font-size: 6.5px; line-height: 8.45px; color: rgba(230, 235, 240, 0.75); display: inline-block; white-space: nowrap; transform: scaleX(1.2465); transform-origin: 0px 50%; width: 47.1px; overflow: hidden;">[2013.5 工程....]</div>
<div class="a" style="left:407px;top:415.5px;width:82px;height:13px;border:1px solid #7a8086;border-radius:2px;background:linear-gradient(rgba(255,255,255,0.22),rgba(255,255,255,0.08))"></div>
<div class="ic" style="left:411px;top:417.5px;width:7px;height:7.5px;background:#40a040;border-radius:1px"></div>
<div class="t" style="left: 421px; top: 417.275px; font-size: 6.5px; line-height: 8.45px; color: rgba(230, 235, 240, 0.75); display: inline-block; white-space: nowrap; transform: scaleX(1.282); transform-origin: 0px 50%; width: 30.2px; overflow: hidden;">Recording</div>
<div class="ic" style="left:616px;top:417px;width:8px;height:8px;background:radial-gradient(circle at 50% 40%,#e0a030 0,#e0a030 45%,#e04040 60%,transparent 64%);"></div>
<div class="ic" style="left:628px;top:417px;width:8px;height:8px;background:radial-gradient(circle at 50% 40%,#303030 0,#303030 45%,#e04040 60%,transparent 64%);"></div>
<div class="ic" style="left:640px;top:417px;width:8px;height:8px;background:radial-gradient(circle at 50% 40%,#f0d020 0,#f0d020 45%,#e04040 60%,transparent 64%);"></div>
<div class="t" style="left:605px;top:416px;font-size:5px;line-height:6px;color:#ddd">▲</div>
<div class="ic" style="left:653px;top:418px;width:4px;height:6px;background:linear-gradient(90deg,#e0e0e0 0,#e0e0e0 50%,transparent 51%);"></div>
<div class="t" style="left: 673px; top: 416.775px; font-size: 6.5px; line-height: 8.45px; color: rgb(232, 232, 232); display: inline-block; white-space: nowrap; transform: scaleX(0.7901); transform-origin: 0px 50%; width: 13.2px; overflow: hidden;">1:03</div>
<div class="a" style="left:0;top:423px;width:633px;height:2px;background:#f2cc80"></div>
<div class="a" style="left:633px;top:423.5px;width:57px;height:1px;background:rgba(220,220,220,0.7)"></div>
<div class="a" style="left:628.5px;top:419.5px;width:9px;height:9px;border-radius:50%;background:#fff"></div>
<div class="a" style="left:684px;top:421px;width:0;height:0;border-top:3px solid transparent;border-bottom:3px solid transparent;border-left:4.5px solid #fff"></div>
<div class="a" style="left:689.5px;top:421px;width:0;height:0;border-top:3px solid transparent;border-bottom:3px solid transparent;border-left:4.5px solid #fff"></div>
<div class="a" style="left:0;top:429px;width:700px;height:36px;background:#111214"></div>
<div class="t" style="left: 25px; top: 438.8px; font-size: 10px; line-height: 13px; color: rgb(228, 228, 228); display: inline-block; white-space: nowrap; transform: scaleX(0.9419); transform-origin: 0px 50%; width: 58.9px; overflow: hidden;">08:35 / 09:16</div>
<div class="a" style="left:282px;top:440px;width:9.5px;height:9.5px;border-radius:1.5px;background:#fff"></div>
<svg class="a" style="left:0;top:429px" width="700" height="36" viewBox="0 429 700 36"><rect x="310" y="439.5" width="2" height="10" fill="#fff"></rect><path d="M321,439.5V449.5L312.5,444.5Z" fill="#fff"></path><path d="M348,437.5V451.5L361,444.5Z" fill="#fff"></path><path d="M388.5,439.5V449.5L397,444.5Z" fill="#fff"></path><rect x="397.3" y="439.5" width="2" height="10" fill="#fff"></rect><path d="M595.5,441.5H598.5L603,438.5V450.5L598.5,447.5H595.5Z" fill="none" stroke="#fff" stroke-width="1.1"></path><path d="M605,441.5Q607,444.5 605,447.5M607.5,439.5Q611,444.5 607.5,449.5" fill="none" stroke="#fff" stroke-width="1.1"></path><rect x="621.5" y="439" width="11.5" height="10" fill="none" stroke="#fff" stroke-width="1.2"></rect><rect x="623.5" y="441" width="7.5" height="6" fill="#fff"></rect><path d="M622,451H633" stroke="#fff" stroke-width="1" stroke-dasharray="1.5 1.2"></path><text x="646" y="450" font-size="12.5" fill="#fff" font-family="Liberation Sans">字</text><path d="M671.5,443V439.5H675M678.5,439.5H682V443M682,446.5V450H678.5M675,450H671.5V446.5M672,440L675.5,443.5M681.5,440L678,443.5M681.5,449.5L678,446M672,449.5L675.5,446" fill="none" stroke="#fff" stroke-width="1.1"></path></svg>
</body></html>
